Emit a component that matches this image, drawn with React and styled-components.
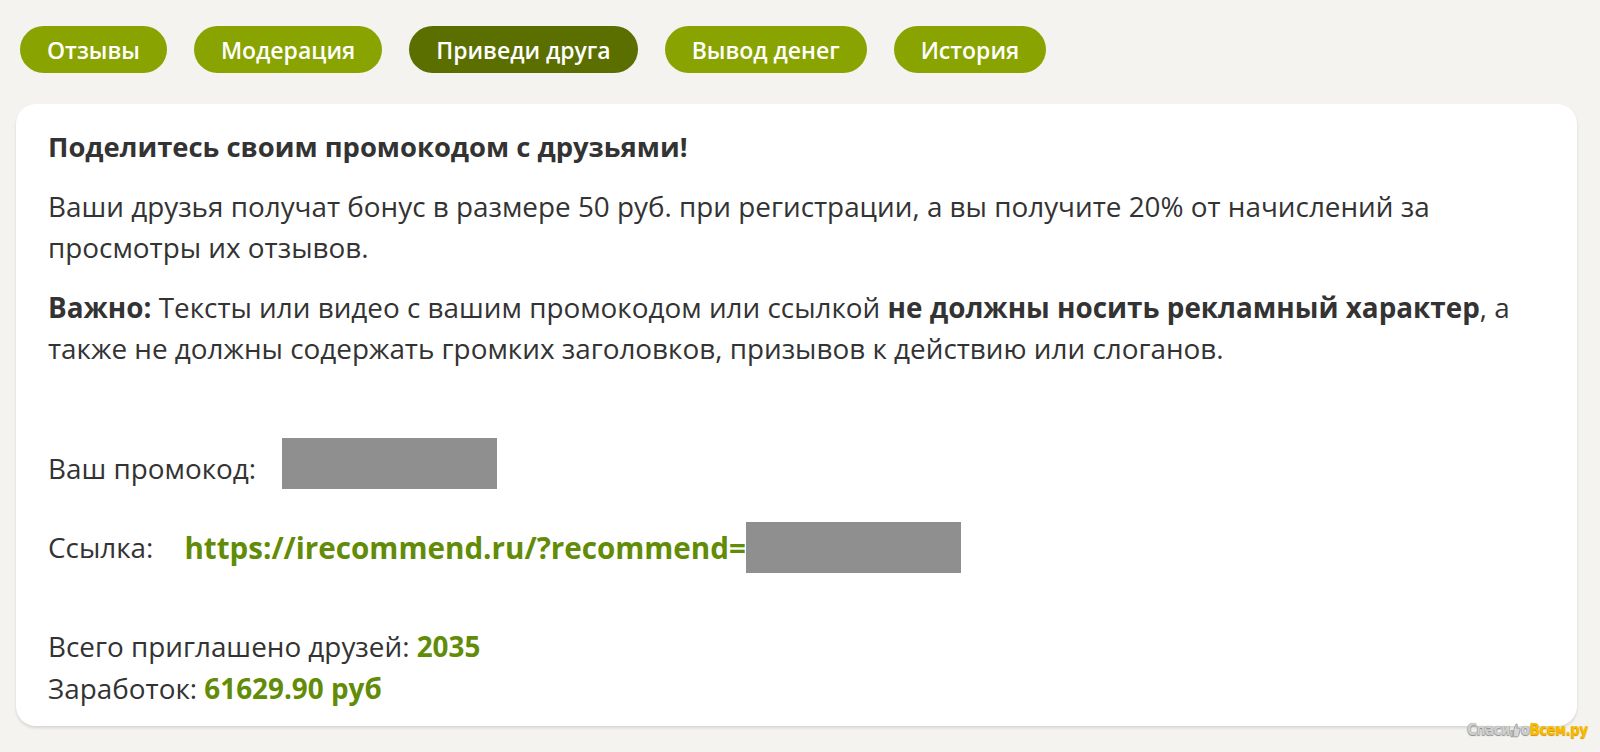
import styled, { createGlobalStyle } from "styled-components";

const GlobalStyle = createGlobalStyle`
  html, body {
    margin: 0;
    padding: 0;
    background: #f4f3ef;
    overflow: hidden;
  }
  body {
    font-family: "Open Sans", "Liberation Sans", sans-serif;
    color: #333333;
  }
`;

const Page = styled.div`
  position: relative;
  height: 752px;
  padding: 26px 23px 0 16px;
  box-sizing: border-box;
`;

const Tabs = styled.nav`
  display: flex;
  gap: 27px;
  padding-left: 4px;
`;

const Tab = styled.a`
  display: flex;
  align-items: center;
  height: 47px;
  padding: 0 27px;
  border-radius: 24px;
  background: ${(props) => (props.active ? "#5b6e00" : "#89a400")};
  color: #ffffff;
  font-size: 23px;
  font-weight: 600;
  text-decoration: none;
  cursor: pointer;
`;

const Card = styled.section`
  margin-top: 31px;
  background: #ffffff;
  border-radius: 20px;
  box-shadow: 0 2px 3px rgba(0, 0, 0, 0.12);
  padding: 22px 32px 17px;
  font-size: 27.85px;
  line-height: 41px;
`;

const Heading = styled.h2`
  margin: 0;
  font-size: 27.4px;
  font-weight: 700;
  line-height: 41px;
`;

const Text = styled.p`
  margin: 19px 0 0;
`;

const Row = styled.div`
  display: flex;
  align-items: ${(props) => props.align || "center"};
  gap: ${(props) => props.gap}px;
  margin-top: ${(props) => props.top}px;
  height: 51px;
`;

const Hidden = styled.span`
  display: inline-block;
  width: 215px;
  height: 51px;
  background: #8f8f8f;
`;

const Link = styled.a`
  display: flex;
  align-items: center;
  color: #628c08;
  font-size: 29.6px;
  font-weight: 700;
  text-decoration: none;
`;

const Stats = styled.div`
  margin-top: 52px;
  line-height: 42px;
`;

const Value = styled.b`
  color: #628c08;
  font-weight: 700;
`;

const Watermark = styled.div`
  position: absolute;
  left: 1467px;
  top: 721px;
  display: flex;
  align-items: center;
  font-family: "DejaVu Sans Condensed", "DejaVu Sans", sans-serif;
  font-weight: 700;
  font-size: 15px;
  letter-spacing: -0.6px;
`;

const Grey = styled.span`
  color: #cfcfcf;
  text-shadow: 0 0 1px #7f7f7f, 0 1px 1px #8f8f8f;
`;

const Yellow = styled.span`
  color: #f7bb00;
  text-shadow: 0 1px 1px #d08a00;
`;

const tabs = ["Отзывы", "Модерация", "Приведи друга", "Вывод денег", "История"];

export default function App() {
  return (
    <Page>
      <GlobalStyle />
      <Tabs>
        {tabs.map((t) => (
          <Tab key={t} active={t === "Приведи друга" ? 1 : 0}>
            {t}
          </Tab>
        ))}
      </Tabs>
      <Card>
        <Heading>Поделитесь своим промокодом с друзьями!</Heading>
        <Text>
          Ваши друзья получат бонус в размере 50 руб. при регистрации, а вы
          получите 20% от начислений за просмотры их отзывов.
        </Text>
        <Text>
          <b>Важно:</b> Тексты или видео с вашим промокодом или ссылкой{" "}
          <b>не должны носить рекламный характер</b>, а также не должны
          содержать громких заголовков, призывов к действию или слоганов.
        </Text>
        <Row gap={26} top={69} align="flex-end">
          <span>Ваш промокод:</span>
          <Hidden />
        </Row>
        <Row gap={31} top={33}>
          <span>Ссылка:</span>
          <Link>
            https://irecommend.ru/?recommend=
            <Hidden />
          </Link>
        </Row>
        <Stats>
          <div>
            Всего приглашено друзей: <Value>2035</Value>
          </div>
          <div>
            Заработок: <Value>61629.90 руб</Value>
          </div>
        </Stats>
      </Card>
      <Watermark>
        <Grey>Спаси</Grey>
        <svg width="11" height="16" viewBox="0 0 12 17">
          <path
            d="M3 16 V9 H1 V16 Z M4 9 L6 3 C6.5 1.5 8 1.5 8 3 L7.5 6.5 H10 C11 6.5 11.5 7.5 11 8.5 L9.5 14.5 C9.2 15.5 8.5 16 7.5 16 H4 Z"
            fill="#d6d6d6"
            stroke="#8a8a8a"
            strokeWidth="0.8"
          />
        </svg>
        <Grey>о</Grey>
        <Yellow>Всем.ру</Yellow>
      </Watermark>
    </Page>
  );
}
